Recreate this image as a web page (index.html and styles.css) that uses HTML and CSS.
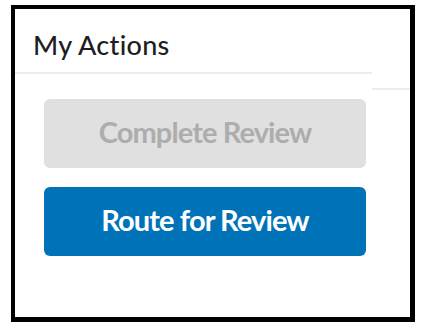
FILE: index.html
```html
<!DOCTYPE html>
<html>
<head>
<meta charset="utf-8">
<link rel="stylesheet" href="styles.css">
</head>
<body>
<div class="frame">
  <div class="top">
    <div class="header"><h2 class="title">My Actions</h2></div>
    <div class="side"></div>
  </div>
  <div class="actions">
    <button class="btn btn-disabled" disabled>Complete Review</button>
    <button class="btn btn-primary">Route for Review</button>
  </div>
</div>
</body>
</html>
```
FILE: styles.css
```css
html, body {
  margin: 0;
  padding: 0;
  background: #ffffff;
}
body {
  font-family: Lato, "Open Sans", sans-serif;
}
.frame {
  box-sizing: border-box;
  margin: 5px 0 0 11px;
  width: 404px;
  height: 317px;
  border: 4px solid #000;
  border-right-width: 5px;
  border-bottom-width: 5px;
  background: #fff;
}
.top {
  display: flex;
  align-items: flex-start;
}
.header {
  box-sizing: border-box;
  width: 357px;
  height: 65px;
  border-bottom: 2px solid #ececec;
  padding: 0 0 0 18px;
  display: flex;
  align-items: center;
}
.title {
  margin: 0;
  font-size: 27px;
  font-weight: 500;
  color: #1e1e1e;
  line-height: 1;
  letter-spacing: 0.3px;
  position: relative;
  top: 4px;
}
.side {
  box-sizing: border-box;
  flex: 1;
  height: 81px;
  border-bottom: 2px solid #ececec;
}
.actions {
  display: flex;
  flex-direction: column;
  gap: 19px;
  padding: 9px 0 0 29px;
}
.btn {
  box-sizing: border-box;
  width: 322px;
  height: 69px;
  border: none;
  border-radius: 6px;
  font-family: Lato, "Open Sans", sans-serif;
  font-size: 29px;
  font-weight: 700;
  letter-spacing: -0.9px;
  padding: 0 0 4px 0;
  margin: 0;
}
.btn-disabled {
  background: #e0e0e0;
  color: #adadad;
}
.btn-primary {
  background: #0073b8;
  color: #fff;
}
```
